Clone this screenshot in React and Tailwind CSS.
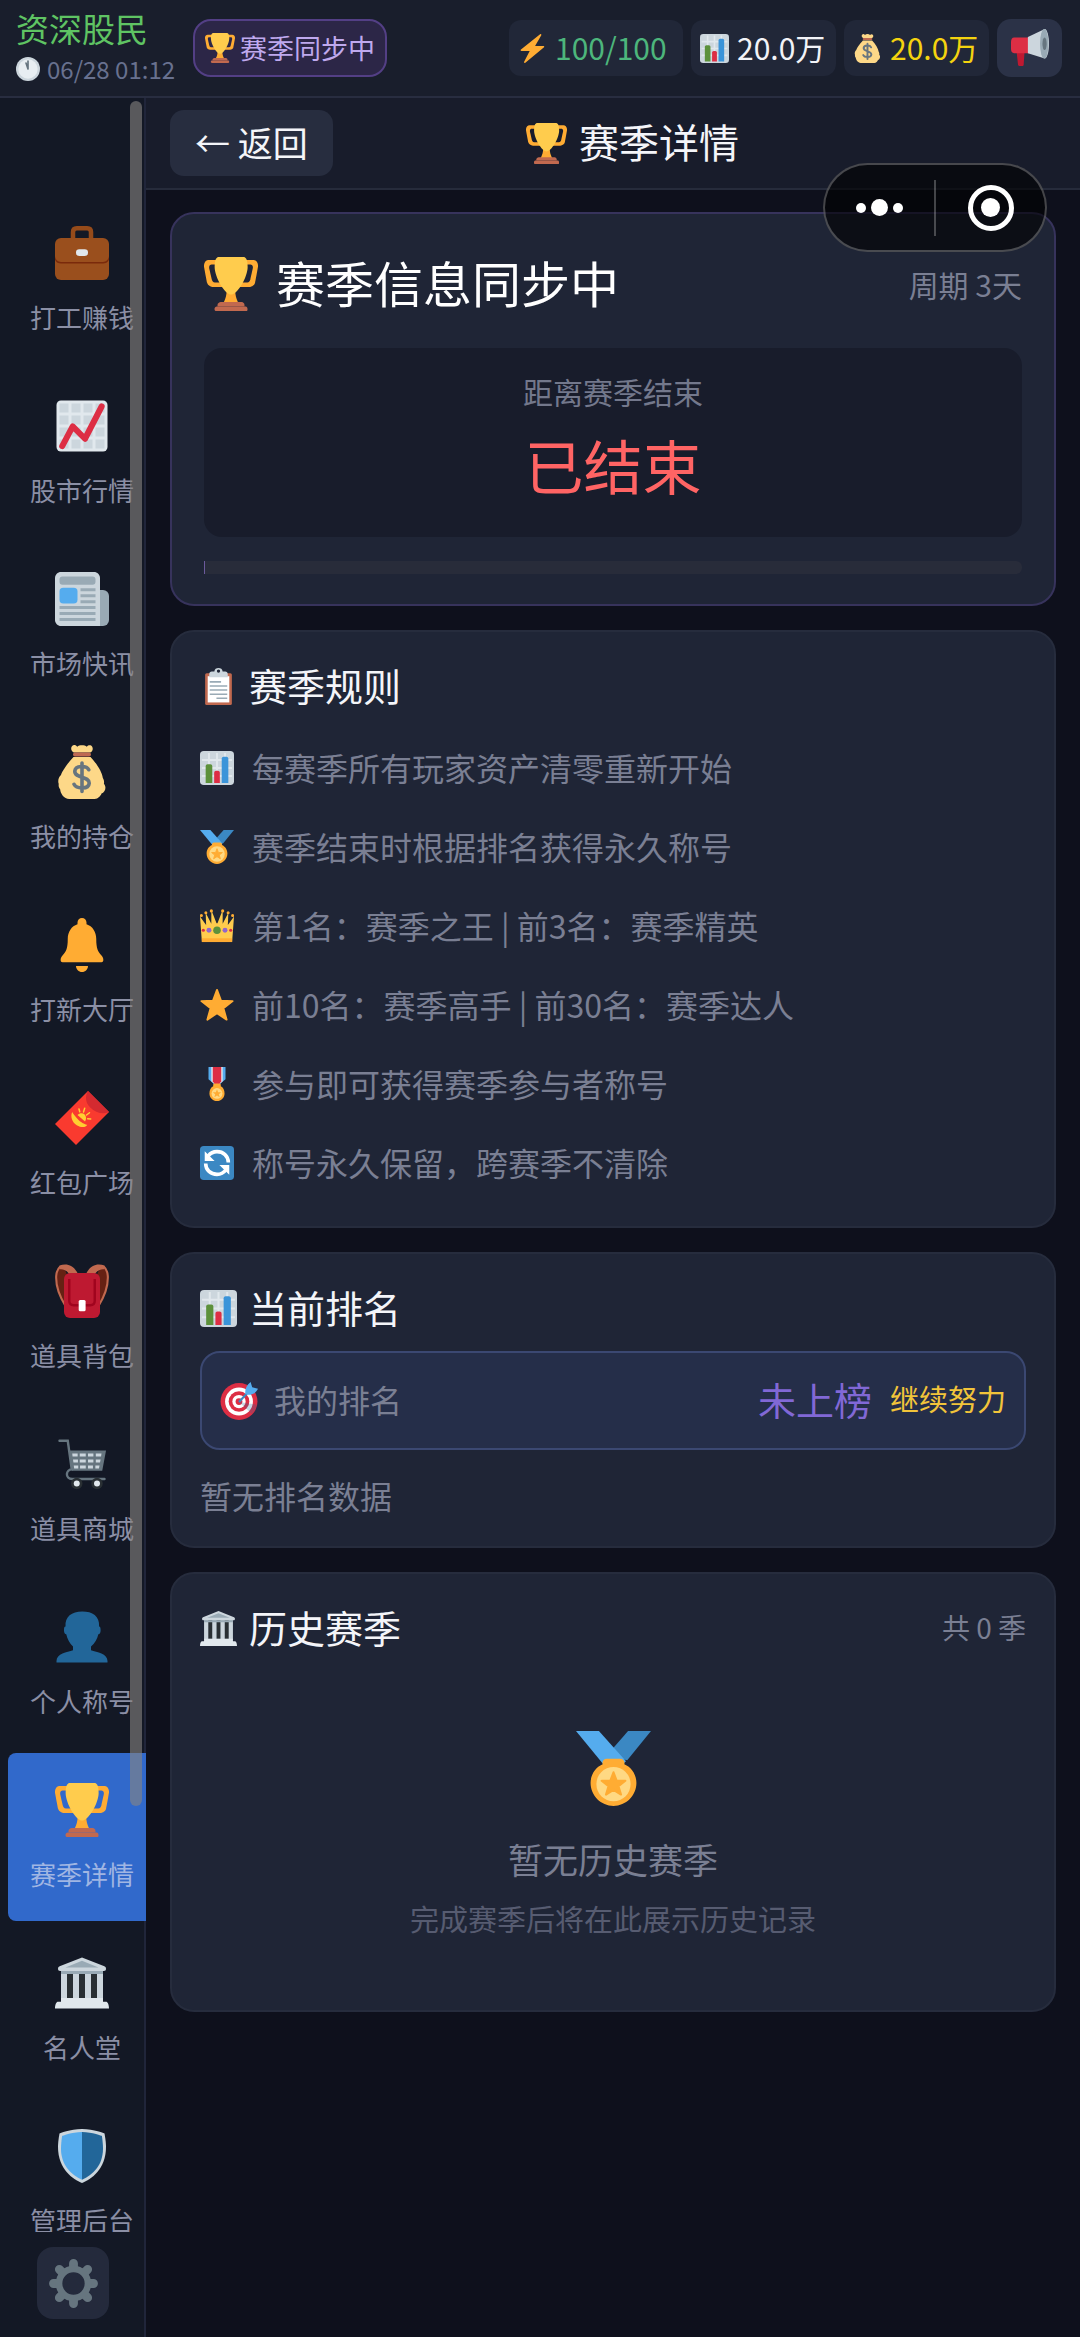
import React from "react";

const GLYPHS = {
  trophy: (
    <>
      <path fill="#FFAC33" d="M5.1 5h6C12.2 5 13 4.9 13 6V4c0-1.1-.8-2-1.9-2h-8c-2 0-3.6 2.1-3 5 0 0 1.8 9.4 1.9 10 .4 1.5 2.1 3 4.1 3h7c1.1 0 0-1.9 0-3v-2c0 1.1-.8 2-1.9 2h-4c-1.1 0-1.8-1-2-2S3.5 7.7 3.5 7.7C3.2 5.750 4 5 5.100 5zm25.800 0h-6C23.800 5 22 4.900 22 6V4c0-1.100 1.800-2 2.900-2h8c2 0 3.600 2.100 3 5 0 0-1.600 9.400-1.800 10-.3 1.500-2 3-4 3H23c-1.100 0-1-1.900-1-3v-2c0 1.100 1.800 2 2.900 2h4c1.100 0 1.800-1 2-2s1.600-7.300 1.600-7.300C32.900 5.750 32 5 30.900 5zM20.800 22c0-7-2.700 0-2.700 0s-3-7-3 0-3.300 10-3.300 10h12.300s-3.300-3-3.300-10z" />
      <path fill="#FFCC4D" d="M29.100 6.600c0 6.800-6.800 18.400-11 18.400s-11-11.600-11-18.400c0-5.600 1.500-6.600 3-6.600h16c1.500 0 3 1 3 6.600z" />
      <path fill="#C1694F" d="M27 33H9v-1c0-1.100 1.200-2 2.200-2h13.900c1 0 1.900.9 1.900 2z" />
      <path fill="#C1694F" d="M29 34.600c0 .8.200 1.400-1.200 1.400H8.500C7.200 36 7 35.400 7 34.600c0-1 .7-1.600 1.500-1.600h19.300c.7 0 1.200.6 1.200 1.600z" />
    </>
  ),
  clock: (
    <>
      <circle cx="18" cy="18" r="18" fill="#CCD6DD" />
      <circle cx="18" cy="18" r="14.500" fill="#E8EEF2" />
      <path stroke="#66757F" strokeWidth="2.500" strokeLinecap="round" fill="none" d="M18 6v12M18 18l-3-9" />
    </>
  ),
  bolt: <path fill="#FFAC33" d="M32.500 15.500c-.2-.3-.6-.5-1-.5H21.200L28.900 1.500C29.400.6 28.200-.4 27.400.3L3.700 19.200c-.9.7-.4 1.800.6 1.800h10.200L7.600 34.500c-.5 1 .7 1.900 1.500 1.200l23.200-19.100c.3-.3.400-.7.2-1.100z" />,
  bars: (
    <>
      <rect width="36" height="36" rx="4" fill="#CCD6DD" />
      <path stroke="#E1E8ED" strokeWidth="2" d="M2 9.500h32M2 18h32M2 26.500h32M9.500 2v32M18 2v32M26.500 2v32" />
      <path fill="#5C913B" d="M6 34V16c0-1.100.9-2 2-2h3c1.100 0 2 .9 2 2v18z" />
      <path fill="#DD2E44" d="M15 34V23c0-1.100.9-2 2-2h2c1.100 0 2 .9 2 2v11z" />
      <path fill="#3B94D9" d="M23 34V8c0-1.100.9-2 2-2h3c1.100 0 2 .9 2 2v26z" />
    </>
  ),
  money: (
    <>
      <path fill="#FDD888" d="M31.900 22c-.5-4-4-9.500-8.200-14H12.300C8 12.500 4.500 18 4 20c-1.600 1.400-2.300 4-1.500 6-.3 1.300.2 2.700 1 3.600C3.500 32 6 36 9.500 36h17c2.200 0 4-2 4.500-3.600 2.400-.9 3.600-4.300 1.600-6.600.3-1.300 0-2.800-.7-3.800z" />
      <path fill="#FDD888" d="M12.500 5c-1.700-.8-2.200-3-1.200-4.200 1-1.200 2.700-.8 3.500.3 1.400-1.300 4.900-1.300 6.400 0 1-1.200 2.800-1.200 3.600 0 .8 1.400.2 3.300-1.300 3.900z" />
      <rect x="12" y="5" width="12" height="2.600" rx="1.300" fill="#BF6952" />
      <path fill="none" stroke="#67757F" strokeWidth="2.400" strokeLinecap="round" d="M18 12v19M22.500 16.500c-1.300-2.800-9-3.200-9.300 1 0 5 9.800 3 9.600 8-.3 4.300-8.600 3.800-10.100.7" />
    </>
  ),
  megaphone: (
    <>
      <path fill="#BE1931" d="M5 19h8l-1 15c0 1.500-5 1.500-5.300 0z" />
      <path fill="#DD2E44" d="M3 8h14v15H3c-2 0-3-2-3-4v-7c0-2 1-4 3-4z" />
      <path fill="#CCD6DD" d="M16 7.500 32 0c2 0 4 6 4 14s-2 14-4 14l-16-5z" />
      <ellipse cx="31.500" cy="14" rx="4" ry="14" fill="#99AAB5" />
      <ellipse cx="31.800" cy="14" rx="2" ry="6" fill="#66757F" />
    </>
  ),
  briefcase: (
    <>
      <path fill="none" stroke="#964B1A" strokeWidth="3" d="M12 9V4c0-1.500.8-2.500 2.500-2.500h7C23.200 1.500 24 2.500 24 4v5" />
      <rect y="8" width="36" height="28" rx="4" fill="#9A4F1D" />
      <path fill="#7A2A0B" d="M0 20c0 2 2 4 4 4h28c2 0 4-2 4-4v2c0 1-1 3-4 3H4c-3 0-4-2-4-3z" />
      <rect x="14" y="15.500" width="8" height="4.500" rx="2.200" fill="#E1E8ED" />
    </>
  ),
  chart: (
    <>
      <rect x="1" y="1" width="34" height="34" rx="3" fill="#E1E8ED" />
      <path fill="#CCD6DD" d="M3 3h6v6H3zM11 3h6v6h-6zM19 3h6v6h-6zM27 3h6v6h-6zM3 11h6v6H3zM11 11h6v6h-6zM19 11h6v6h-6zM27 11h6v6h-6zM3 19h6v6H3zM11 19h6v6h-6zM19 19h6v6h-6zM27 19h6v6h-6zM3 27h6v6H3zM11 27h6v6h-6zM19 27h6v6h-6zM27 27h6v6h-6z" />
      <path fill="none" stroke="#DD2E44" strokeWidth="4" strokeLinecap="round" strokeLinejoin="round" d="M4.800 31.400l7-13.200 8.200 8.300L31.100 5" />
    </>
  ),
  news: (
    <>
      <rect x="24" y="12" width="12" height="24" rx="4" fill="#99AAB5" />
      <path fill="#CCD6DD" d="M4 0h22c2.200 0 4 1.800 4 4v32H4c-2.200 0-4-1.800-4-4V4c0-2.200 1.800-4 4-4z" />
      <rect x="3" y="3" width="24" height="5.500" rx="2" fill="#99AAB5" />
      <rect x="3" y="10.500" width="12" height="10.500" rx="2.500" fill="#55ACEE" />
      <path stroke="#99AAB5" strokeWidth="2" d="M17 11.800h10M17 15.800h10M17 19.800h10M3 23.700h24M3 27.700h24M3 31.700h24" />
    </>
  ),
  bell: (
    <>
      <path fill="#FFAC33" d="M21 4.200V3c0-1.700-1.300-3-3-3s-3 1.300-3 3v1.200C11 5.500 8.500 9.200 8.500 14c0 6-1 8.500-3.500 11-1.500 1.500-1.800 4.500 0 4.500h26c1.800 0 1.500-3 0-4.500-2.500-2.500-3.500-5-3.500-11 0-4.800-2.500-8.500-6.500-9.800z" />
      <path fill="#FFAC33" d="M14 32h8c0 2.200-1.800 4-4 4s-4-1.800-4-4z" />
    </>
  ),
  envelope: (
    <>
      <path fill="#F93A2F" d="M22 0 36 14 14 36 0 22z" />
      <path fill="#D42A30" d="M22 0 36 14c-4 2-9 .5-12.500-3C20 7.500 20 3.500 22 0z" />
      <path fill="#FFCE31" d="M11.500 14c-1.500 3 0 7 3 8.800 3 1.800 6 1.700 7-.3-1-.2-3.500-1-5.800-3.200-2.200-2.100-3.700-4.300-4.200-5.300z" />
      <path fill="none" stroke="#FFCE31" strokeWidth="1" strokeLinecap="round" d="M16.500 13.800 16 12M19 14l.8-2.500M21 16l2-1.500M21.800 18.500l2 .2" />
      <path fill="#FFCE31" d="M15 16c1.500-1.500 3.500-1.500 4.800-.3 1.200 1.300 1.200 3.300.2 4.600z" />
    </>
  ),
  backpack: (
    <>
      <path fill="#662113" d="M1 7c0 9 3 16 7 22V8c0-3-3-6-4-6S1 4 1 7zM35 7c0 9-3 16-7 22V8c0-3 3-6 4-6s3 2 3 5z" />
      <path fill="none" stroke="#C1694F" strokeWidth="1.400" d="M7 28C2 20 .5 14 .8 8 1 5 2 3 3.500 1.700M29 28c5-8 6.500-14 6.200-20-.2-3-1.200-5-2.700-6.300" />
      <path fill="#C1694F" d="M3 1c4-1.500 9-1 12 5l-5 2C9 5 6 3 3 3.500zM33 1c-4-1.500-9-1-12 5l5 2c1-3 4-5 7-4.500z" />
      <rect x="6" y="6" width="24" height="30" rx="4" fill="#BE1931" />
      <path fill="none" stroke="#A0041E" strokeWidth="1.600" d="M9.500 10v14.500c0 2 1 3 3 3h11c2 0 3-1 3-3V10" />
      <rect x="15.800" y="24" width="4.600" height="7.500" rx="1" fill="#fff" />
    </>
  ),
  cart: (
    <>
      <path fill="none" stroke="#66757F" strokeWidth="1.600" strokeLinecap="round" d="M3 2.500h5.500l2.500 18M11.500 21.500c-4.500 0-5 6.500 0 6.500H33" />
      <path fill="#66757F" d="M9.500 9H34l-2.500 13.500H11.200z" />
      <path fill="#CCD6DD" d="M11.500 11h3.600v2h-3.400zM16.500 11h4v2h-4zM22 11h3.600v2H22zM27.200 11h3.800l-.3 2h-3.500zM12 15h3.300v2h-3zM16.500 15h4v2h-4zM22 15h3.600v2H22zM27.200 15h3.200l-.4 2h-2.800zM12.500 19h3v2h-2.700zM16.700 19h3.800v2h-3.800zM22 19h3.300v2H22zM26.900 19h2.800l-.4 2h-2.400z" />
      <circle cx="14.500" cy="31" r="3.800" fill="#292F33" />
      <circle cx="28" cy="31" r="3.800" fill="#292F33" />
      <circle cx="14.500" cy="31" r="2" fill="#E1E8ED" />
      <circle cx="28" cy="31" r="2" fill="#E1E8ED" />
    </>
  ),
  person: <path fill="#269" d="M24 26.800v-2.500c2.500-2 4.200-5.200 4.900-8.200.9 0 1.500-.9 1.500-2.500s-.2-2.600-1-2.600C29.800 4 25 1 18.200 1 11 1 6.600 4.500 7 11c-.9 0-1 1-1 2.600s.6 2.500 1.500 2.500c.7 3 2.300 6.300 4.500 8.200v2.500C8 28 1 29 1 34v1h34v-1c0-5-7-6-11-7.200z" />,
  temple: (
    <>
      <path fill="#66757F" d="M4 9h28v22H4z" />
      <path fill="#292F33" d="M8 10h4v18H8zM16 10h4v18h-4zM24 10h4v18h-4z" />
      <path fill="#CCD6DD" d="M4 10h4v19H4zM12 10h4v19h-4zM20 10h4v19h-4zM28 10h4v19h-4z" />
      <path fill="#CCD6DD" d="M2 8.500c0-1 .5-1.400 1.500-1.800L18 1l14.500 5.700c1 .4 1.500.8 1.500 1.800S33.500 10 32.500 10h-29C2.500 10 2 9.500 2 8.500z" />
      <path fill="#99AAB5" d="M18 3.200 29 7.600H7zM4 10h28v2H4z" />
      <path fill="#E1E8ED" d="M4 28h28v3H4zM2 30.500h32c1 0 2 1.800 2 4.500H0c0-2.700 1-4.500 2-4.500z" />
    </>
  ),
  shield: (
    <>
      <path fill="#CCD6DD" d="M33 3s-7-3-15-3S3 3 3 3s-1 5-1 9c0 15 10 21.500 16 24 6-2.500 16-9 16-24 0-4-1-9-1-9z" />
      <path fill="#55ACEE" d="M18 33.900C11 30.500 4 24.500 4 13c0-3 .7-8.300.7-8.300S11 2 18 2z" />
      <path fill="#269" d="M18 33.900C25 30.500 32 24.500 32 13c0-3-.7-8.300-.7-8.300S25 2 18 2z" />
    </>
  ),
  gear: (
    <>
      <path stroke="#66757F" strokeWidth="6.500" strokeLinecap="round" d="M18 3.300v29.400M3.300 18h29.400M7.600 7.600l20.800 20.800M28.400 7.600 7.600 28.400" />
      <circle cx="18" cy="18" r="10.600" fill="#242A3C" stroke="#66757F" strokeWidth="4.800" />
    </>
  ),
  clipboard: (
    <>
      <rect x="5" y="5" width="26" height="31" rx="1.500" fill="#C1694F" />
      <rect x="7.500" y="8" width="21" height="25.500" fill="#fff" />
      <path fill="#CCD6DD" d="M9 9V6c0-1.500 1-2.500 2.500-2.500H14C14 1 16 0 18 0s4 1 4 3.500h2.500C26 3.500 27 4.500 27 6v3z" />
      <circle cx="18" cy="3" r="1.600" fill="#1F2536" />
      <path stroke="#99AAB5" strokeWidth="1.500" d="M9.500 13.500h11M9.500 17.500h17M9.500 21.500h17M9.500 25.500h17M16 29.500h10.500" />
    </>
  ),
  medal: (
    <>
      <path fill="#3B88C3" d="M25 0h11L24.600 14l-5-1-1.600-5z" />
      <path fill="#55ACEE" d="M0 0h11l13 14.500-3 2.500h-7z" />
      <path fill="#FFAC33" d="M12.700 15.300c0-1.100.9-2 2-2h6.600c1.100 0 2 .9 2 2l-.1.700C26.700 17.500 29 21 29 25c0 6-5 11-11 11S7 31 7 25c0-4 2.300-7.500 5.800-9z" />
      <circle cx="18" cy="25.500" r="8.200" fill="#FFD983" />
      <path fill="#FFAC33" stroke="#FFAC33" strokeLinejoin="round" d="m18 19.800 1.500 4 4.200.1-3.300 2.600 1.200 4-3.600-2.300-3.600 2.300 1.200-4-3.300-2.600 4.200-.1z" />
    </>
  ),
  crown: (
    <>
      <path fill="#FFCC4D" d="M2 35 0 8l6.500 9L6 4l6 11.500L12 1l5.500 14h1L24 1v14.500L30 4l-.5 13L36 8l-2 27z" />
      <g fill="#FFAC33">
        <circle cx="1.500" cy="7" r="1.600" />
        <circle cx="6.200" cy="4" r="1.600" />
        <circle cx="12" cy="2" r="1.700" />
        <circle cx="24" cy="2" r="1.700" />
        <circle cx="29.800" cy="4" r="1.600" />
        <circle cx="34.500" cy="7" r="1.600" />
        <path d="M2 31h32v4H2z" />
      </g>
      <circle cx="18" cy="22.500" r="4" fill="#5C913B" />
      <g fill="#9266CC">
        <circle cx="9.500" cy="22.500" r="2.600" />
        <circle cx="26.500" cy="22.500" r="2.600" />
      </g>
      <g fill="#DD2E44">
        <circle cx="3.500" cy="22.500" r="1.700" />
        <circle cx="32.500" cy="22.500" r="1.700" />
      </g>
    </>
  ),
  star: <path fill="#FFAC33" stroke="#FFAC33" strokeWidth="2" strokeLinejoin="round" d="m18 2 4.200 11.400 12.300.5-9.700 7.500L28.200 33.500 18 26.700 7.800 33.500l3.400-12.100L1.500 13.900l12.300-.5z" />,
  ribbon: (
    <>
      <path fill="#55ACEE" d="M9 0h18v13l-6 5h-6l-6-5z" />
      <path fill="#E1E8ED" d="M12 0h12v15l-3 3h-6l-3-3z" />
      <path fill="#DD2E44" d="M13.500 0h9v15l-2 3h-5l-2-3z" />
      <path fill="#FFAC33" d="M14 18.500c0-1.500 8-1.500 8 0v2c2.500 1.300 4 3.700 4 7.500 0 4.500-3.500 8-8 8s-8-3.500-8-8c0-3.800 1.500-6.200 4-7.500z" />
      <circle cx="18" cy="28" r="5.700" fill="#FFD983" />
      <path fill="#FFAC33" d="m18 23.500 1.200 3.200 3.300.1-2.600 2 .9 3.200-2.800-1.800-2.800 1.800.9-3.200-2.600-2 3.300-.1z" />
    </>
  ),
  refresh: (
    <>
      <rect width="36" height="36" rx="4" fill="#3B88C3" />
      <path fill="none" stroke="#fff" strokeWidth="3.800" d="M30 17.500c0-7-5.400-11.500-12-11.500-4 0-7.200 1.800-9.300 4.600M6 18.500C6 25.500 11.400 30 18 30c4 0 7.200-1.800 9.300-4.600" />
      <path fill="#fff" d="M5 5.500V16h10.500zM31 30.500V20H20.500z" />
    </>
  ),
  target: (
    <>
      <circle cx="18" cy="18.500" r="17.500" fill="#DD2E44" />
      <circle cx="18" cy="18.500" r="13.200" fill="#fff" />
      <circle cx="18" cy="18.500" r="9.800" fill="#DD2E44" />
      <circle cx="18" cy="18.500" r="6.300" fill="#fff" />
      <circle cx="18" cy="18.500" r="3.200" fill="#DD2E44" />
      <path fill="#269" opacity=".25" d="m18 19 12 11c2.500-2.500 4-5 5-8.500z" />
      <path stroke="#3B88C3" strokeWidth="2" d="M18 19 29 7" />
      <path fill="#55ACEE" d="M24 11c-.5-4 1-8 5-11l1.500 5L36 6.500C33.500 11 30 12.500 25.500 12z" />
    </>
  ),
};

function Emoji({ name, className }) {
  return (
    <svg viewBox="0 0 36 36" className={`shrink-0 ${className}`} aria-hidden="true">
      {GLYPHS[name]}
    </svg>
  );
}

const NAV = [
  { icon: "briefcase", label: "打工赚钱" },
  { icon: "chart", label: "股市行情" },
  { icon: "news", label: "市场快讯" },
  { icon: "money", label: "我的持仓" },
  { icon: "bell", label: "打新大厅" },
  { icon: "envelope", label: "红包广场" },
  { icon: "backpack", label: "道具背包" },
  { icon: "cart", label: "道具商城" },
  { icon: "person", label: "个人称号" },
  { icon: "trophy", label: "赛季详情", active: true },
  { icon: "temple", label: "名人堂" },
  { icon: "shield", label: "管理后台" },
];

const RULES = [
  { icon: "bars", text: "每赛季所有玩家资产清零重新开始" },
  { icon: "medal", text: "赛季结束时根据排名获得永久称号" },
  { icon: "crown", text: "第1名：赛季之王 | 前3名：赛季精英" },
  { icon: "star", text: "前10名：赛季高手 | 前30名：赛季达人" },
  { icon: "ribbon", text: "参与即可获得赛季参与者称号" },
  { icon: "refresh", text: "称号永久保留，跨赛季不清除" },
];

function Stat({ icon, className, children }) {
  return (
    <div className={`flex h-14 items-center gap-2 rounded-xl bg-[#212738] pl-[9px] text-[30px] leading-10 ${className}`}>
      <Emoji name={icon} className="size-[29px]" />
      <span className="pb-0.5">{children}</span>
    </div>
  );
}

function TopBar() {
  return (
    <header className="flex h-[98px] shrink-0 items-center border-b-2 border-[#282d40] bg-[#191e2c] pl-4 pr-[18px]">
      <div className="w-[177px] shrink-0">
        <div className="text-[33px] leading-[42px] text-[#5fc463]">资深股民</div>
        <div className="flex items-center gap-[7px] text-[24px] leading-10 text-[#68718f]">
          <Emoji name="clock" className="size-6" />
          <span className="whitespace-nowrap">06/28 01:12</span>
        </div>
      </div>
      <button className="flex h-[58px] items-center gap-[5px] whitespace-nowrap rounded-[18px] border-2 border-[#533f85] bg-[#2c2647] px-[10px] text-[27px] text-[#bfa9ee]">
        <Emoji name="trophy" className="size-[30px]" />
        赛季同步中
      </button>
      <div className="ml-auto flex items-center gap-2">
        <Stat icon="bolt" className="w-[174px] text-[#4db67c]">100/100</Stat>
        <Stat icon="bars" className="w-[145px] text-[#f2f3f7]">20.0万</Stat>
        <Stat icon="money" className="w-[145px] text-[#f4d30f]">20.0万</Stat>
        <button aria-label="公告" className="flex h-[58px] w-[65px] items-center justify-center rounded-[14px] bg-[#2b3247]">
          <Emoji name="megaphone" className="size-[38px]" />
        </button>
      </div>
    </header>
  );
}

function Sidebar() {
  return (
    <aside className="relative flex w-[146px] shrink-0 flex-col bg-[#131825] shadow-[inset_-2px_0_#20253a]">
      <nav className="flex min-h-0 flex-1 flex-col gap-[5px] overflow-hidden pl-2 pt-[98px]">
        {NAV.map((item) => (
          <button
            key={item.label}
            className={`flex h-[168px] shrink-0 flex-col items-center gap-[17px] rounded-l-lg pl-[10px] pt-[30px] ${
              item.active ? "bg-[#3169cb] text-[#a0b6e3]" : "text-[#8b8fa5]"
            }`}
          >
            <Emoji name={item.icon} className="size-[54px]" />
            <span className="whitespace-nowrap text-[26px] leading-10">{item.label}</span>
          </button>
        ))}
      </nav>
      <div className="flex justify-center pb-[18px] pt-[15px]">
        <button aria-label="设置" className="flex size-[72px] items-center justify-center rounded-2xl bg-[#242a3c]">
          <Emoji name="gear" className="size-[49px]" />
        </button>
      </div>
      <div className="absolute right-1 top-[3px] h-[1705px] w-3 rounded-full bg-[#888582]/60" />
    </aside>
  );
}

function CardHeading({ icon, title, children }) {
  return (
    <div className="flex h-[52px] items-center">
      <Emoji name={icon} className="size-[37px]" />
      <h2 className="ml-3 pb-0.5 text-[38px] leading-[50px] text-[#f4f5f9]">{title}</h2>
      {children}
    </div>
  );
}

function Card({ className, children }) {
  return (
    <section className={`rounded-3xl border-2 border-[#262c3d] bg-[#1f2536] px-7 pt-7 ${className}`}>
      {children}
    </section>
  );
}

function SeasonCard() {
  return (
    <section className="rounded-3xl border-2 border-[#37335c] bg-[#1f2536] px-8 pb-[30px] pt-8">
      <div className="flex h-[76px] items-center">
        <Emoji name="trophy" className="size-[54px]" />
        <h2 className="ml-[18px] pb-1 text-[49px] leading-[72px] text-white">赛季信息同步中</h2>
        <span className="ml-auto text-[30px] text-[#7a7f93]">周期 3天</span>
      </div>
      <div className="mt-[26px] flex h-[189px] flex-col items-center rounded-[18px] bg-[#181c2b] pt-[21px]">
        <div className="text-[30px] leading-[44px] text-[#73788c]">距离赛季结束</div>
        <div className="mt-3 text-[59px] leading-[80px] text-[#ff6464]">已结束</div>
      </div>
      <div className="mt-6 h-[13px] overflow-hidden rounded-r-md bg-[#282c3a]">
        <div className="h-full w-px bg-[#6b5a9c]" />
      </div>
    </section>
  );
}

function Capsule() {
  return (
    <div className="absolute right-[33px] top-[163px] flex h-[89px] w-[224px] items-center rounded-full border-2 border-white/25 bg-black/60">
      <button aria-label="更多" className="flex h-full flex-1 items-center justify-center gap-[5px]">
        <span className="size-[10px] rounded-full bg-white" />
        <span className="size-[17px] rounded-full bg-white" />
        <span className="size-[10px] rounded-full bg-white" />
      </button>
      <span className="h-14 w-0.5 bg-white/25" />
      <button aria-label="关闭" className="flex h-full flex-1 items-center justify-center">
        <span className="flex size-[46px] items-center justify-center rounded-full border-[5px] border-white">
          <span className="size-[19px] rounded-full bg-white" />
        </span>
      </button>
    </div>
  );
}

export default function App() {
  return (
    <div className="relative flex h-dvh flex-col overflow-hidden bg-[#0e101c] font-['Noto_Sans_CJK_SC',sans-serif]">
      <TopBar />
      <div className="flex min-h-0 flex-1">
        <Sidebar />
        <main className="min-w-0 flex-1">
          <div className="flex h-[92px] items-center justify-between border-b-2 border-[#262b3b] bg-[#181c2b] px-6">
            <button className="h-[66px] rounded-[14px] bg-[#272d3f] px-[25px] pb-0.5 text-[35px] leading-[64px] text-[#f4f5f9]">← 返回</button>
            <h1 className="flex items-center gap-3 text-[40px] text-[#f4f5f9]">
              <Emoji name="trophy" className="size-[41px]" />
              <span className="pb-1 leading-[56px]">赛季详情</span>
            </h1>
            <div className="w-[124px]" />
          </div>

          <div className="flex flex-col gap-6 px-6 pt-[22px]">
            <SeasonCard />

            <Card className="pb-6">
              <CardHeading icon="clipboard" title="赛季规则" />
              <ul className="mt-4">
                {RULES.map((rule) => (
                  <li key={rule.icon} className="flex h-[79px] items-center gap-[18px] text-[32px] text-[#7a7f93]">
                    <Emoji name={rule.icon} className="size-[34px]" />
                    <span className="pb-0.5">{rule.text}</span>
                  </li>
                ))}
              </ul>
            </Card>

            <Card className="pb-[22px]">
              <CardHeading icon="bars" title="当前排名" />
              <div className="mt-[17px] flex h-[99px] items-center rounded-[20px] border-2 border-[#3b4872] bg-[#252e49] px-[18px]">
                <Emoji name="target" className="size-[38px]" />
                <span className="ml-4 pb-1 text-[32px] text-[#7a7f93]">我的排名</span>
                <span className="ml-auto pb-1 text-[38px] text-[#8168d6]">未上榜</span>
                <span className="ml-[18px] pb-1 text-[29px] text-[#f2c43a]">继续努力</span>
              </div>
              <p className="mt-4 text-[32px] leading-[58px] text-[#7a7f93]">暂无排名数据</p>
            </Card>

            <Card className="pb-[70px]">
              <CardHeading icon="temple" title="历史赛季">
                <span className="ml-auto pb-0.5 text-[28px] text-[#7a7f93]">共 0 季</span>
              </CardHeading>
              <div className="flex flex-col items-center pt-[77px]">
                <Emoji name="medal" className="size-[75px]" />
                <p className="mt-[27px] text-[35px] leading-[52px] text-[#7a7f93]">暂无历史赛季</p>
                <p className="mt-[11px] text-[29px] leading-[44px] text-[#575c71]">完成赛季后将在此展示历史记录</p>
              </div>
            </Card>
          </div>
        </main>
      </div>
      <Capsule />
    </div>
  );
}
